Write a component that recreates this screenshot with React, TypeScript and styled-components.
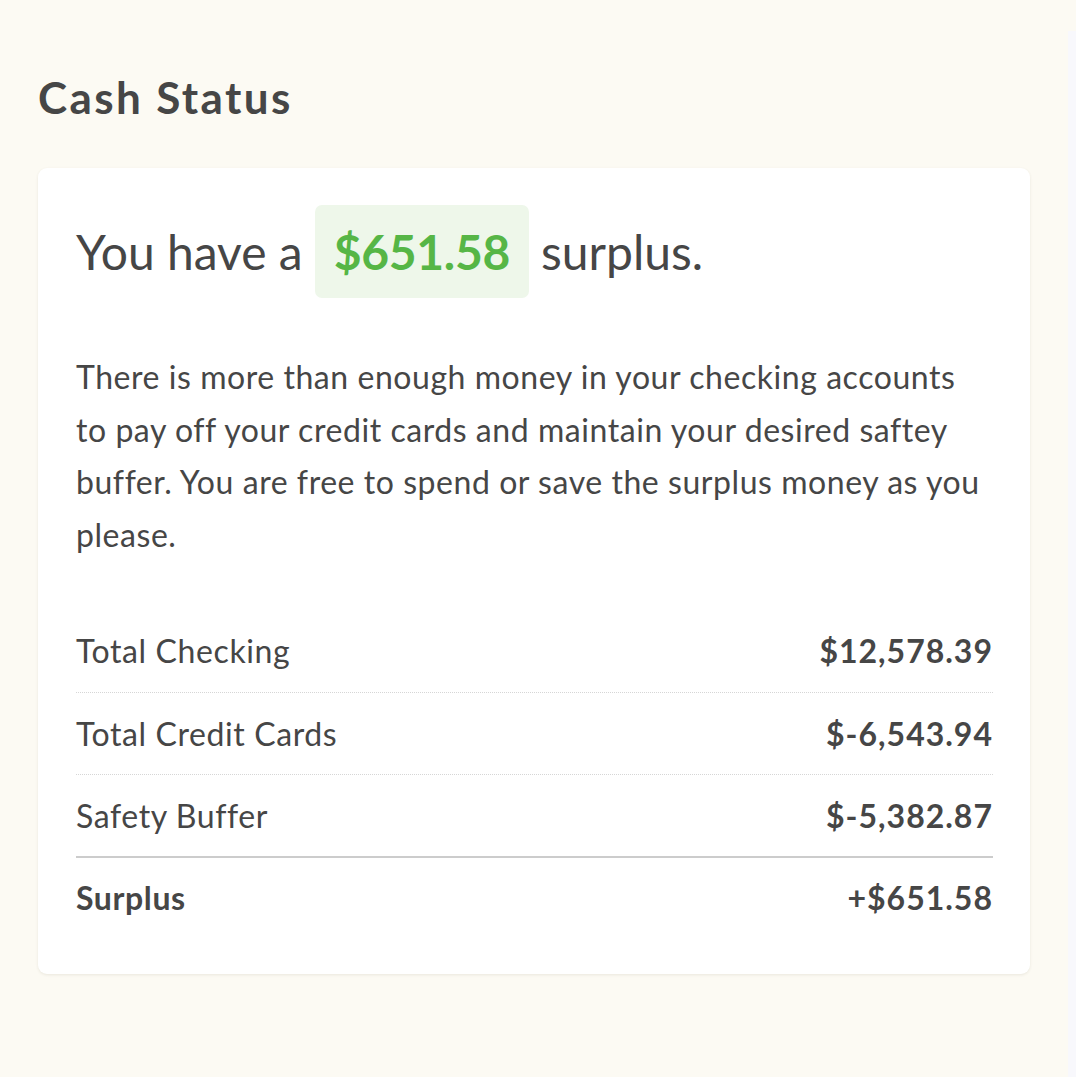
import React from 'react';
import styled, { createGlobalStyle } from 'styled-components';

const GlobalStyle = createGlobalStyle`
  html, body {
    margin: 0;
    padding: 0;
    background: #fcfaf3;
    overflow: hidden;
  }
  * {
    box-sizing: border-box;
  }
`;

const Page = styled.div`
  display: flex;
  min-height: 100vh;
  font-family: Lato, "Liberation Sans", sans-serif;
  color: #464646;
`;

const Main = styled.main`
  flex: 0 0 1068px;
  padding: 73px 38px 0;
`;

const Aside = styled.aside`
  flex: 1 1 auto;
  min-width: 0;
  margin-top: 31px;
  background: #f8f8fc;
`;

const Title = styled.h1`
  margin: 0 0 47px;
  font-size: 44px;
  line-height: 48px;
  font-weight: 700;
  letter-spacing: 2.4px;
`;

const Card = styled.section`
  background: #ffffff;
  border-radius: 9px;
  box-shadow: 0 1px 3px rgba(80, 70, 40, 0.1);
  padding: 37px 37px 36px 38px;
`;

const Headline = styled.div`
  display: flex;
  align-items: center;
  gap: 12px;
  font-size: 48px;
  line-height: 1;
`;

const Amount = styled.span`
  display: inline-flex;
  align-items: center;
  height: 93px;
  padding: 0 19px;
  border-radius: 7px;
  background: #eef7ea;
  color: #56b646;
  font-weight: 700;
  letter-spacing: -0.3px;
`;

const Message = styled.p`
  margin: 53px 0 48px;
  font-size: 32px;
  line-height: 52.7px;
  letter-spacing: 0.55px;
`;

const Row = styled.div<{ $total?: boolean }>`
  display: flex;
  justify-content: space-between;
  align-items: center;
  height: 82px;
  font-size: 32px;
  letter-spacing: 0.6px;
  font-weight: ${p => (p.$total ? 700 : 400)};
  & + & {
    border-top: 1px dotted #d6d6d6;
  }
  &:last-child {
    border-top: 2px solid #cccccc;
  }
`;

const Value = styled.span`
  font-weight: 700;
  letter-spacing: 1px;
`;

const rows = [
  { label: 'Total Checking', value: '$12,578.39' },
  { label: 'Total Credit Cards', value: '$-6,543.94' },
  { label: 'Safety Buffer', value: '$-5,382.87' },
];

export default function App() {
  return (
    <>
      <GlobalStyle />
      <Page>
        <Main>
          <Title>Cash Status</Title>
          <Card>
            <Headline>
              You have a <Amount>$651.58</Amount> surplus.
            </Headline>
            <Message>
              There is more than enough money in your checking accounts to pay
              off your credit cards and maintain your desired saftey buffer. You
              are free to spend or save the surplus money as you please.
            </Message>
            <div>
              {rows.map(r => (
                <Row key={r.label}>
                  <span>{r.label}</span>
                  <Value>{r.value}</Value>
                </Row>
              ))}
              <Row $total>
                <span>Surplus</span>
                <Value>+$651.58</Value>
              </Row>
            </div>
          </Card>
        </Main>
        <Aside />
      </Page>
    </>
  );
}
